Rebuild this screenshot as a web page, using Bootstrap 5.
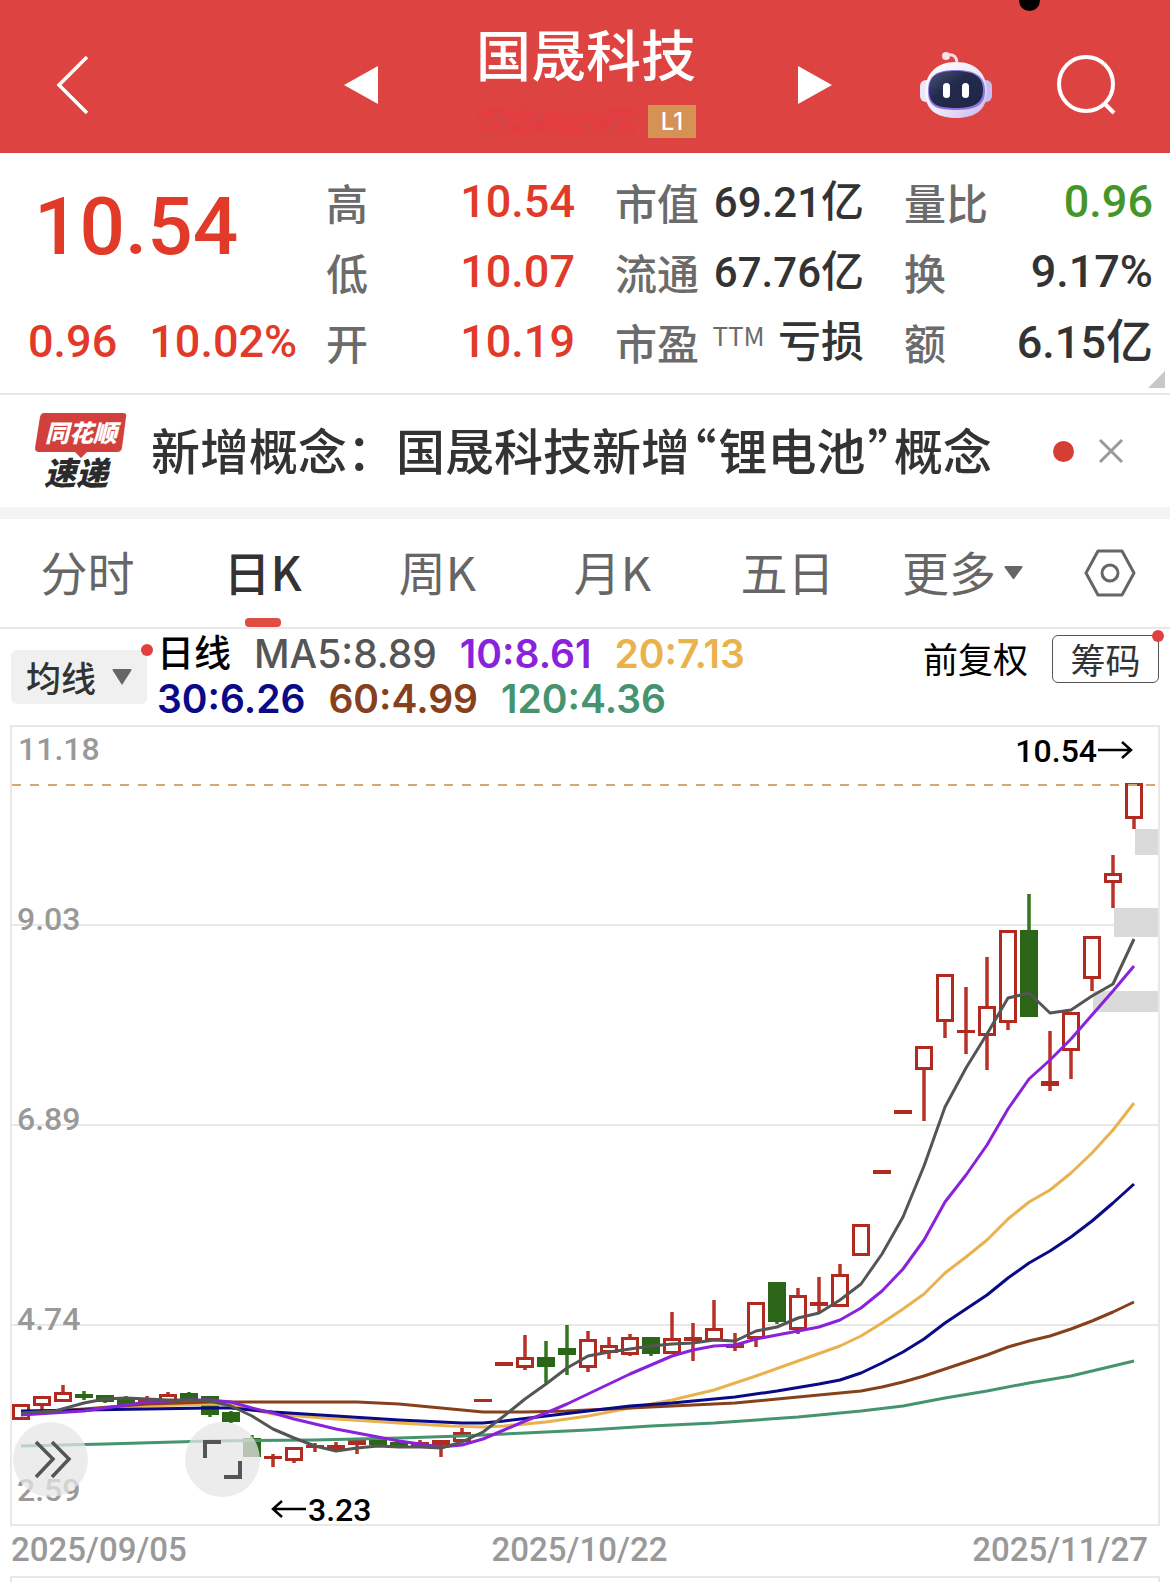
<!DOCTYPE html>
<html lang="zh-CN">
<head>
<meta charset="utf-8">
<meta name="viewport" content="width=device-width, initial-scale=1">
<title>国晟科技</title>
<link rel="stylesheet" href="https://cdn.jsdelivr.net/npm/bootstrap@5.3.0/dist/css/bootstrap.min.css">
<style>
  :root { --up:#e23a28; --brand:#dd4340; --ink:#333; --soft:#6b6b6b; --line:#e8e8e8; }
  body { font-family:"Noto Sans CJK SC",sans-serif; color:var(--ink); background:#fff; }
  .num { font-family:"Roboto","Noto Sans CJK SC",sans-serif; font-weight:500; }
  svg { display:block; overflow:visible; }
  .plain { border:0; background:none; padding:0; color:inherit; }

  .topbar { background:var(--brand); height:153px; padding:0 54px; color:#fff; }
  .side { flex:1 1 0; padding-top:16px; }
  .stock-name { font-size:55px; line-height:60px; font-weight:500; margin:0; }
  .level { background:#d69252; font:500 24px/33px "Inter",sans-serif; width:48px; height:33px; }
  .titlebox { padding-top:22px; }
  .subline { margin-top:21px; }
  .camera { left:88%; top:-14px; width:21px; height:25px; border-radius:11px; background:#000; margin-left:-11px; }
  .mid { width:488px; margin-left:2px; }
  .tools { gap:64px; }

  .quote { grid-template-columns:298fr 249fr 289fr 289fr; padding:14px 17px 0 28px; height:240px; }
  .quote .rowline { height:70px; display:flex; align-items:center; justify-content:space-between; white-space:nowrap; }
  .indent { padding-left:40px; }
  .tag { font-size:42px; line-height:70px; font-weight:500; color:var(--soft); }
  .val { font-size:45px; line-height:70px; }
  .val-m { font-size:42px; line-height:70px; }
  .val .yi { font-size:47px; }
  .val-m .yi { font-size:43px; }
  .price { font-size:80px; line-height:120px; height:140px; padding:0 6px; }
  .change { gap:32px; }
  .up { color:var(--up); } .down { color:#459629; }
  .ttm { font-size:26px; line-height:40px; color:var(--soft); align-self:flex-start; padding-top:8px; }
  .corner { right:5px; bottom:5px; }

  .news { border-top:2px solid var(--line); height:114px; padding:0 46px 0 35px; }
  .headline { font-size:49px; line-height:60px; font-weight:500; color:var(--ink); text-decoration:none; white-space:nowrap; padding-bottom:4px; }
  .headline .q { font-feature-settings:"halt"; padding:0 2px; }
  .dot { width:21px; height:21px; border-radius:50%; background:#d43f35; margin-right:24px; }
  .band { height:12px; background:#f4f4f4; }

  .tabs { height:110px; border-bottom:2px solid var(--line); }
  .tabs > * { flex:175 1 0; font-size:47px; line-height:104px; color:#666; }
  .tabs > button.plain { padding-bottom:4px; }
  .tabs > button.gear { flex:120 1 0; padding-bottom:0; }
  .tabs > .active { color:var(--ink); font-weight:500; }
  .tabs > .active::after { content:""; position:absolute; bottom:0; left:50%; margin-left:-18px; width:36px; height:9px; border-radius:4px; background:#e04d43; }

  .legendbar { height:96px; padding:0 11px; }
  .pill { width:136px; height:54px; margin-top:21px; border-radius:6px; background:#f0f0f0; font-size:35px; line-height:54px; font-weight:500; color:var(--ink); }
  .reddot { width:12px; height:12px; border-radius:50%; background:#e24040; right:-6px; top:-6px; }
  .ma { font:600 39px/45px "Inter","Noto Sans CJK SC",sans-serif; column-gap:23px; margin:2px 0 0 10px; }
  .ma .cn { font-size:37px; font-weight:500; color:#000; }
  .ma .thin { font-weight:500; }
  .adj { font-size:35px; line-height:48px; color:#000; margin-top:5px; }
  .chips { font-size:35px; line-height:44px; width:107px; height:48px; border:1px solid #555; border-radius:6px; background:#fff; color:var(--ink); margin-top:6px; }

  .plot { margin:0 10px; }
  .plot svg.kline { width:100%; height:auto; }
  .plot text { font-family:"Roboto",sans-serif; font-size:32px; font-weight:500; fill:#999; }
  .plot text.mark-on { fill:#000; }
  .fab { width:75px; height:75px; border-radius:50%; background:rgba(230,230,230,.75); top:87%; }
  .fab-a { left:3px; } .fab-b { left:calc(15% + 2px); }
  .dates { margin:0 22px 0 11px; font-size:33px; line-height:48px; height:50px; color:#999; }
  .next { margin:0 10px; min-height:8px; border:2px solid var(--line); border-bottom:0; }
</style>
</head>
<body class="min-vh-100 d-flex flex-column overflow-x-hidden">

<header class="topbar d-flex justify-content-between position-relative">
  <span class="camera position-absolute"></span>
  <div class="side d-flex align-items-center">
    <button class="plain" aria-label="返回"><svg width="36" height="60" viewBox="0 0 36 60" fill="none" stroke="#fff" stroke-width="3.5"><path d="M33 2 5 30 33 58"/></svg></button>
  </div>
  <div class="mid d-flex justify-content-between">
    <button class="plain pt-3" aria-label="上一只"><svg width="34" height="38" viewBox="0 0 34 38"><path d="M2 19 36 0V38Z" fill="#fff"/></svg></button>
    <div class="titlebox d-flex flex-column align-items-center">
      <h1 class="stock-name">国晟科技</h1>
      <div class="subline d-flex align-items-center gap-2 lh-1">
        <svg width="164" height="36" viewBox="0 0 164 36" aria-hidden="true"><defs><filter id="sm"><feGaussianBlur stdDeviation="2"/></filter></defs><g filter="url(#sm)" stroke="#e93940" stroke-width="5" fill="none" opacity=".8"><path d="M4 14 22 6 34 14 50 10 62 22 78 12 92 24 108 12 124 22 140 8 158 10M6 26 28 22 48 28 70 22 94 30 118 26 136 18 156 28"/><path d="M6 18 14 24M22 10 30 26M58 14 66 20M12 32 20 30M108 20 116 28M142 16 132 30" stroke="#bf4a50" stroke-width="4" opacity=".7"/></g></svg>
        <span class="level text-center">L1</span>
      </div>
    </div>
    <button class="plain pt-3" aria-label="下一只"><svg width="34" height="38" viewBox="0 0 34 38"><path d="M36 19 2 0V38Z" fill="#fff"/></svg></button>
  </div>
  <div class="side tools d-flex align-items-center justify-content-end">
    <button class="plain" aria-label="助手"><svg width="72" height="68" viewBox="0 0 72 68">
      <defs><linearGradient id="hd" x1="0" y1="0" x2="1" y2="1"><stop offset="0" stop-color="#fff"/><stop offset=".55" stop-color="#ece8f8"/><stop offset="1" stop-color="#c3b4f0"/></linearGradient>
      <linearGradient id="fc" x1="0" y1="0" x2="1" y2="1"><stop offset="0" stop-color="#4a5478"/><stop offset=".4" stop-color="#232b4c"/><stop offset="1" stop-color="#1e2444"/></linearGradient></defs>
      <path d="M26 4q10-2 11 7" fill="none" stroke="#f3d9e4" stroke-width="3"/><circle cx="26" cy="5" r="4" fill="#f8dfe8"/>
      <rect x="0" y="29" width="12" height="22" rx="6" fill="#eae5fa"/><rect x="60" y="29" width="12" height="22" rx="6" fill="#c8bdf0"/>
      <path d="M36 11C57 11 67 24 67 41S56 67 36 67 5 58 5 41 15 11 36 11Z" fill="url(#hd)"/>
      <path d="M36 19C55 19 65 25 65 40S55 59 36 59 8 56 8 40 17 19 36 19Z" fill="#8f74e0"/>
      <path d="M36 20C54 20 63 26 63 39S54 57 36 57 9 54 9 39 18 20 36 20Z" fill="url(#fc)"/>
      <rect x="23" y="32" width="7" height="15" rx="3.5" fill="#fff"/><rect x="42" y="32" width="7" height="15" rx="3.5" fill="#fff"/></svg></button>
    <button class="plain" aria-label="搜索"><svg width="60" height="60" viewBox="0 0 60 60" fill="none" stroke="#fff" stroke-width="4"><circle cx="30" cy="29" r="27"/><path d="M48 48 58 58"/></svg></button>
  </div>
</header>

<section class="quote d-grid position-relative">
  <div>
    <div class="price num up">10.54</div>
    <div class="rowline change num val up justify-content-start"><span>0.96</span><span>10.02%</span></div>
  </div>
  <div>
    <div class="rowline"><span class="tag">高</span><span class="num val up">10.54</span></div>
    <div class="rowline"><span class="tag">低</span><span class="num val up">10.07</span></div>
    <div class="rowline"><span class="tag">开</span><span class="num val up">10.19</span></div>
  </div>
  <div class="indent">
    <div class="rowline"><span class="tag">市值</span><span class="num val-m">69.21<span class="yi">亿</span></span></div>
    <div class="rowline"><span class="tag">流通</span><span class="num val-m">67.76<span class="yi">亿</span></span></div>
    <div class="rowline"><span class="tag">市盈</span><span class="ttm">TTM</span><span class="num val-m"><span class="yi">亏损</span></span></div>
  </div>
  <div class="indent">
    <div class="rowline"><span class="tag">量比</span><span class="num val down">0.96</span></div>
    <div class="rowline"><span class="tag">换</span><span class="num val">9.17%</span></div>
    <div class="rowline"><span class="tag">额</span><span class="num val">6.15<span class="yi">亿</span></span></div>
  </div>
  <svg class="corner position-absolute" width="17" height="17" viewBox="0 0 17 17"><path d="M17 0V17H0Z" fill="#c8c8c8"/></svg>
</section>

<section class="news d-flex align-items-center">
  <svg width="92" height="90" viewBox="0 -6 92 90" role="img" aria-label="同花顺速递">
    <path d="M9 1H88Q92 1 91 5L87 36Q86 40 82 40H52L46 46 40 40H4Q0 40 0 36L5 5Q6 1 9 1Z" fill="#d2403c"/>
    <g font-family="Noto Sans CJK SC,sans-serif" font-weight="900" font-style="italic">
      <text x="10" y="30" font-size="24" fill="#fff">同花顺</text>
      <text x="9" y="73" font-size="32" fill="#2b2b2b">速递</text></g>
  </svg>
  <a href="#" class="headline ms-4">新增概念：国晟科技新增<span class="q">“</span>锂电池<span class="q">”</span>概念</a>
  <span class="dot ms-auto"></span>
  <button class="plain" aria-label="关闭"><svg width="26" height="26" viewBox="0 0 26 26" stroke="#999" stroke-width="3"><path d="M2 2 24 24M24 2 2 24"/></svg></button>
</section>
<div class="band"></div>

<nav class="tabs d-flex text-center">
  <button class="plain">分时</button>
  <button class="plain active position-relative">日K</button>
  <button class="plain">周K</button>
  <button class="plain">月K</button>
  <button class="plain">五日</button>
  <button class="plain d-flex justify-content-center align-items-center gap-2">更多<svg width="19" height="14" viewBox="0 0 19 14"><path d="M1 2H18Q19 3 18 4L10 15H9L1 4Q0 3 1 2Z" fill="#666"/></svg></button>
  <button class="plain gear d-flex align-items-center justify-content-center" aria-label="设置"><svg width="54" height="48" viewBox="0 0 54 48" fill="none" stroke="#666" stroke-width="3"><path d="M15 2H39L51 24 39 46H15L3 24Z" stroke-linejoin="round"/><circle cx="27" cy="24" r="8"/></svg></button>
</nav>

<section class="legendbar d-flex">
  <button class="plain pill position-relative d-flex align-items-center justify-content-center gap-3 flex-shrink-0">均线<svg width="20" height="16" viewBox="0 0 20 16"><path d="M1 0H19Q20 1 19 2L10 16 1 2Q0 1 1 0Z" fill="#666"/></svg><span class="reddot position-absolute"></span></button>
  <div class="ma d-flex flex-wrap align-content-start flex-grow-1">
    <span class="cn">日线</span><span class="thin" style="color:#555">MA5:8.89</span><span style="color:#8a22dc">10:8.61</span><span style="color:#e9b24d">20:7.13</span>
    <span class="w-100"></span>
    <span style="color:#0a0a86">30:6.26</span><span style="color:#86401c">60:4.99</span><span style="color:#45946f">120:4.36</span>
  </div>
  <span class="adj flex-shrink-0">前复权</span>
  <button class="chips position-relative p-0 ms-4 flex-shrink-0">筹码<span class="reddot position-absolute"></span></button>
</section>

<section class="plot position-relative">
  <svg class="kline" viewBox="10 725 1150 801" role="img" aria-label="日K线图">
    <g stroke="#e8e8e8" stroke-width="2" fill="none"><rect x="11" y="726" width="1148" height="799"/><path d="M12 925H1158M12 1125H1158M12 1325H1158"/></g>
    <g fill="#dadada"><rect x="1135" y="829" width="23" height="26"/><rect x="1114" y="908" width="44" height="29"/><rect x="1093" y="991" width="65" height="21"/></g>
    <g><text x="18" y="760">11.18</text><text x="17" y="930">9.03</text><text x="17" y="1130">6.89</text><text x="17" y="1330">4.74</text><text x="17" y="1501">2.59</text></g>
    <g id="candles"></g>
    <path d="M12 785H1158" stroke="#d6a676" stroke-width="2" stroke-dasharray="9 9"/>
    <g id="averages" fill="none" stroke-width="3" stroke-linejoin="round"></g>
    <text class="mark-on" x="1097" y="762" text-anchor="end">10.54</text>
    <text class="mark-on" x="308" y="1521">3.23</text>
    <path d="M1098 750H1130M1122 742 1131 750 1122 758M306 1509H274M282 1501 273 1509 282 1517" fill="none" stroke="#000" stroke-width="2.5"/>
  </svg>
  <button class="plain fab fab-a position-absolute" aria-label="展开"><svg width="75" height="75" viewBox="0 0 75 75" fill="none" stroke="#555" stroke-width="3.5"><path d="M23 20 40 37 23 55M39 20 56 37 39 55"/></svg></button>
  <button class="plain fab fab-b position-absolute" aria-label="全屏"><svg width="75" height="75" viewBox="0 0 75 75" fill="none" stroke="#555" stroke-width="4"><path d="M20 36V20H36M39 55H55V39"/></svg></button>
</section>

<div class="dates num d-flex justify-content-between"><span>2025/09/05</span><span>2025/10/22</span><span>2025/11/27</span></div>
<div class="next flex-grow-1"></div>

<script src="https://cdn.jsdelivr.net/npm/bootstrap@5.3.0/dist/js/bootstrap.bundle.min.js"></script>
<script>
  // Each day: direction (r rising, g falling), wick top, body top, body bottom, wick bottom
  const days = `r 1404 1404 1420 1420|r 1396 1396 1406 1410|r 1385 1392 1402 1402|g 1391 1394 1398 1400|g 1395 1395 1402 1403|g 1396 1397 1405 1405|r 1396 1399 1405 1406|r 1392 1394 1402 1402|g 1392 1393 1400 1400|g 1396 1396 1415 1417|g 1411 1412 1422 1423|g 1435 1438 1457 1457|r 1454 1456 1459 1467|r 1447 1447 1461 1463|r 1443 1445 1448 1452|r 1442 1445 1450 1451|r 1440 1440 1445 1454|g 1439 1439 1445 1445|g 1442 1442 1448 1448|r 1440 1442 1447 1448|r 1440 1440 1445 1457|r 1428 1432 1442 1442|r 1399 1399 1402 1402|r 1362 1362 1366 1366|r 1335 1357 1368 1370|g 1341 1357 1367 1383|g 1325 1348 1355 1375|r 1331 1339 1368 1372|r 1337 1345 1353 1359|r 1334 1337 1355 1356|g 1337 1337 1354 1356|r 1312 1338 1354 1354|r 1323 1337 1341 1361|r 1300 1328 1341 1341|r 1333 1344 1348 1351|r 1302 1302 1339 1347|g 1282 1282 1322 1324|r 1288 1295 1330 1334|r 1277 1302 1306 1313|r 1264 1274 1307 1307|r 1224 1224 1256 1256|r 1170 1170 1174 1174|r 1110 1110 1114 1114|r 1046 1046 1070 1121|r 974 974 1022 1038|r 987 1030 1033 1054|r 957 1006 1036 1070|r 930 930 1023 1030|g 894 930 1017 1017|r 1031 1081 1086 1091|r 1012 1012 1051 1079|r 936 936 979 991|r 855 873 883 908|r 783 783 819 829`.split('|').map(s => s.split(' '));
  const x = i => 21 + 21 * i;
  document.getElementById('candles').innerHTML = days.map(([k, ...v], i) => {
    const [wt, t, b, wb] = v.map(Number), c = k === 'r' ? '#b02a20' : '#2b6518', w = k === 'r' ? '#b93228' : '#34761f';
    const hollow = k === 'r' && b - t > 6;
    return `<path d="M${x(i)} ${wt}V${t}M${x(i)} ${b}V${wb}" stroke="${w}" stroke-width="3.5"/>` + (hollow
      ? `<rect x="${x(i) - 7.5}" y="${t + 1.5}" width="15" height="${b - t - 3}" fill="#fff" stroke="${c}" stroke-width="3"/>`
      : `<rect x="${x(i) - 9}" y="${t}" width="18" height="${b - t}" fill="${c}"/>`);
  }).join('');

  const averages = {
    '#45946f': '21,1446 105,1444 210,1441 315,1440 399,1438 462,1436 525,1433 588,1430 651,1426 714,1423 798,1417 861,1411 903,1406 945,1398 987,1391 1029,1383 1071,1376 1092,1371 1134,1361',
    '#e9b24d': '21,1413 84,1410 147,1406 210,1404 231,1405 273,1414 336,1419 399,1423 450,1426 483,1427 504,1426 546,1422 588,1416 630,1408 672,1400 714,1390 735,1383 756,1376 798,1361 840,1346 861,1336 882,1323 903,1309 924,1294 945,1273 966,1257 987,1240 1008,1219 1029,1202 1050,1190 1071,1173 1092,1153 1113,1130 1134,1103',
    '#86401c': '21,1413 84,1409 147,1404 210,1402 273,1402 357,1402 399,1404 441,1408 462,1410 483,1412 525,1412 567,1411 630,1408 672,1406 735,1403 798,1397 861,1391 882,1387 903,1382 924,1376 945,1369 987,1355 1008,1347 1029,1341 1050,1336 1071,1329 1092,1321 1113,1312 1134,1302',
    '#0a0a86': '21,1411 84,1410 147,1409 210,1408 231,1408 273,1412 336,1416 399,1420 462,1423 483,1423 504,1421 546,1416 588,1411 630,1406 672,1403 735,1397 777,1391 819,1384 840,1380 861,1373 882,1363 903,1352 924,1339 945,1323 966,1309 987,1295 1008,1278 1029,1263 1050,1251 1071,1237 1092,1221 1113,1203 1134,1184',
    '#8a22dc': '21,1415 84,1411 105,1408 126,1405 147,1402 168,1401 189,1400 210,1400 231,1402 252,1408 273,1413 294,1419 315,1424 336,1429 357,1433 378,1437 399,1441 420,1444 441,1447 462,1445 483,1439 504,1430 525,1421 546,1413 567,1404 588,1394 609,1384 630,1374 651,1365 672,1356 693,1350 714,1346 735,1345 756,1339 777,1335 798,1331 819,1327 840,1320 861,1308 882,1291 903,1269 924,1240 945,1202 966,1175 987,1145 1008,1109 1029,1079 1050,1060 1071,1039 1092,1015 1113,991 1134,966',
    '#555': '21,1413 55,1411 84,1403 105,1399 126,1398 147,1399 168,1400 189,1400 210,1401 231,1406 252,1416 273,1429 294,1438 315,1446 336,1451 357,1448 378,1446 399,1447 420,1447 441,1448 462,1442 483,1432 504,1416 525,1399 546,1384 567,1368 588,1356 609,1352 630,1349 651,1346 672,1344 693,1343 714,1340 735,1341 756,1331 777,1327 798,1318 819,1313 840,1300 861,1284 882,1254 903,1217 924,1166 945,1107 966,1068 987,1034 1008,998 1029,993 1050,1013 1071,1010 1092,996 1113,984 1134,939'
  };
  document.getElementById('averages').innerHTML = Object.entries(averages)
    .map(([c, p]) => `<polyline points="${p}" stroke="${c}"/>`).join('');
</script>
</body>
</html>
